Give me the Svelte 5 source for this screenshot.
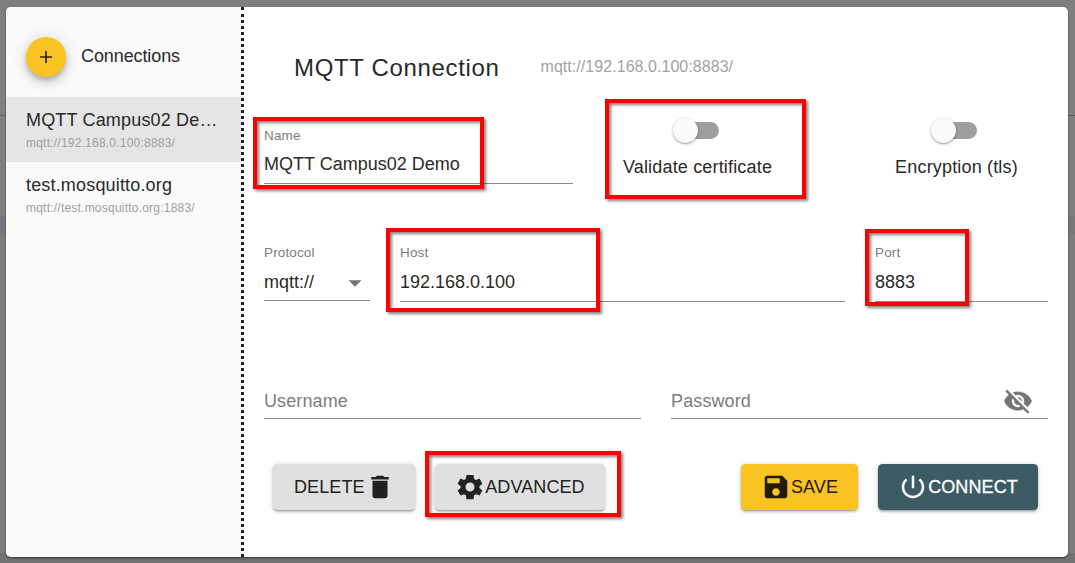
<script>
  const connections = [
    { name: 'MQTT Campus02 Demo', short: 'MQTT Campus02 De…', url: 'mqtt://192.168.0.100:8883/', active: true },
    { name: 'test.mosquitto.org', short: 'test.mosquitto.org', url: 'mqtt://test.mosquitto.org:1883/', active: false }
  ];
  const toggles = ['Validate certificate', 'Encryption (tls)'];
</script>

<div class="backdrop">
  <div class="dialog">
    <aside>
      <div class="side-head">
        <button class="fab" aria-label="Add">
          <svg width="14" height="14" viewBox="0 0 14 14"><path d="M7 1v12M1 7h12" stroke="#2b2208" stroke-width="1.7" /></svg>
        </button>
        <span>Connections</span>
      </div>
      {#each connections as c}
        <div class="item" class:active={c.active}>
          <div class="item-name">{c.short}</div>
          <div class="item-url">{c.url}</div>
        </div>
      {/each}
    </aside>
    <div class="divider"></div>

    <main>
      <header>
        <h1>MQTT Connection</h1>
        <span class="url">mqtt://192.168.0.100:8883/</span>
      </header>

      <div class="row row-name">
        <div class="field">
          <div class="label">Name</div>
          <div class="value">{connections[0].name}</div>
        </div>
        {#each toggles as t}
          <div class="toggle">
            <div class="switch"><i></i></div>
            <span>{t}</span>
          </div>
        {/each}
      </div>

      <div class="row row-host">
        <div class="field protocol">
          <div class="label">Protocol</div>
          <div class="value">
            mqtt://
            <svg width="14" height="7" viewBox="0 0 14 7"><path d="M0.5 0.3h13L7 6.8z" fill="#757575" /></svg>
          </div>
        </div>
        <div class="field">
          <div class="label">Host</div>
          <div class="value">192.168.0.100</div>
        </div>
        <div class="field">
          <div class="label">Port</div>
          <div class="value">8883</div>
        </div>
      </div>

      <div class="row row-auth">
        <div class="field empty"><span>Username</span></div>
        <div class="field empty">
          <span>Password</span>
          <svg class="eye" width="30" height="30" viewBox="0 0 24 24" fill="#757575" stroke="#757575" stroke-width="0.25"><path d="M12 7c2.76 0 5 2.24 5 5 0 .65-.13 1.26-.36 1.83l2.92 2.92c1.51-1.26 2.7-2.89 3.43-4.75-1.73-4.39-6-7.5-11-7.5-1.4 0-2.74.25-3.98.7l2.16 2.16C10.74 7.13 11.35 7 12 7zM2 4.27l2.28 2.28.46.46C3.08 8.3 1.78 10.02 1 12c1.73 4.39 6 7.5 11 7.5 1.55 0 3.03-.3 4.38-.84l.42.42L19.73 22 21 20.73 3.27 3 2 4.27zM7.53 9.8l1.55 1.55c-.05.21-.08.43-.08.65 0 1.66 1.34 3 3 3 .22 0 .44-.03.65-.08l1.55 1.55c-.67.33-1.41.53-2.2.53-2.76 0-5-2.24-5-5 0-.79.2-1.53.53-2.2zm4.31-.78l3.15 3.15.02-.16c0-1.66-1.34-3-3-3l-.17.01z" /></svg>
        </div>
      </div>

      <div class="actions">
        <button class="btn delete">DELETE
          <svg width="30" height="30" viewBox="0 0 24 24" fill="currentColor"><path d="M6 19c0 1.1.9 2 2 2h8c1.1 0 2-.9 2-2V7H6v12zM19 4h-3.5l-1-1h-5l-1 1H5v2h14V4z" /></svg>
        </button>
        <button class="btn advanced">
          <svg width="30" height="30" viewBox="0 0 24 24" fill="currentColor"><path fill-rule="evenodd" d="M9.2 2.3h5.6l.5 3.1 1.5.9 2.8-1.1 2.3 4.1-2.4 2v1.4l2.4 2-2.3 4.1-2.8-1.1-1.5.9-.5 3.1H9.2l-.5-3.1-1.5-.9-2.8 1.1-2.3-4.1 2.4-2v-1.4l-2.4-2 2.3-4.1 2.8 1.1 1.5-.9zM12 8.4a3.6 3.6 0 1 0 0 7.2 3.6 3.6 0 0 0 0-7.2z" /></svg>ADVANCED
        </button>
        <button class="btn save">
          <svg width="30" height="30" viewBox="0 0 24 24" fill="currentColor"><path d="M17 3H5c-1.11 0-2 .9-2 2v14c0 1.1.89 2 2 2h14c1.1 0 2-.9 2-2V7l-4-4zm-5 16c-1.66 0-3-1.34-3-3s1.34-3 3-3 3 1.34 3 3-1.34 3-3 3zm3-10H5V5h10v4z" /></svg>SAVE
        </button>
        <button class="btn connect">
          <svg width="30" height="30" viewBox="0 0 24 24" fill="currentColor"><path d="M13 3h-2v10h2V3zm4.83 2.17l-1.42 1.42C17.99 7.86 19 9.81 19 12c0 3.87-3.13 7-7 7s-7-3.13-7-7c0-2.19 1.01-4.14 2.58-5.42L6.17 5.17C4.23 6.82 3 9.26 3 12c0 4.97 4.03 9 9 9s9-4.03 9-9c0-2.74-1.23-5.18-3.17-6.83z" /></svg>CONNECT
        </button>
      </div>
    </main>
  </div>

  <div class="mark mark-name"></div>
  <div class="mark mark-validate"></div>
  <div class="mark mark-host"></div>
  <div class="mark mark-port"></div>
  <div class="mark mark-advanced"></div>
</div>

<style>
  :global(body) { margin: 0; overflow: hidden; }
  .backdrop {
    position: relative;
    box-sizing: border-box;
    width: 1075px;
    height: 563px;
    padding: 7px 7px 6px 6px;
    background: linear-gradient(#7f7f7f 0 115px, #5c5c5c 115px 116px, #7f7f7f 116px 216px, #77777d 216px 234px, #7d7d7d 234px 553px, #727272 553px);
    font-family: "Liberation Sans", Arial, sans-serif;
    font-size: 18px;
    letter-spacing: 0.17px;
    color: #2a2a2a;
  }
  .dialog {
    display: flex;
    height: 550px;
    border-radius: 5px;
    overflow: hidden;
    background: #fff;
    box-shadow: 0 1px 2px rgba(0, 0, 0, 0.55);
  }
  aside { flex: none; width: 235px; background: #fafafa; }
  .side-head {
    display: flex;
    gap: 15px;
    box-sizing: border-box;
    height: 90px;
    padding: 30px 20px 0;
    line-height: 38px;
    letter-spacing: -0.1px;
  }
  .fab {
    display: flex;
    align-items: center;
    justify-content: center;
    width: 40px;
    height: 40px;
    padding: 0;
    border: 0;
    border-radius: 50%;
    background: #f9c322;
    box-shadow: 0 3px 5px -1px rgba(0, 0, 0, 0.2), 0 6px 10px rgba(0, 0, 0, 0.14), 0 1px 18px rgba(0, 0, 0, 0.12);
  }
  .item { box-sizing: border-box; height: 65px; padding: 12px 20px 0; }
  .active { background: #e5e5e5; }
  .item-name { line-height: 22px; white-space: nowrap; }
  .item-url { margin-top: 3px; font-size: 12px; line-height: 18px; letter-spacing: 0.22px; color: #a0a0a0; }
  .divider {
    flex: none;
    width: 3px;
    background:
      linear-gradient(#212121, #212121) 0 0 / 3px 3px no-repeat,
      linear-gradient(#fff, #fff) 0 0 / 3px 7px no-repeat,
      repeating-linear-gradient(#fff 0 1px, #212121 1px 4px, #fff 4px 6px);
  }

  main { flex: 1; min-width: 0; padding: 0 20px; }
  header { display: flex; align-items: center; gap: 41px; height: 110px; padding-left: 30px; }
  h1 { margin: 12px 0 0; font-size: 24px; font-weight: 400; letter-spacing: 0.66px; }
  .url { margin-top: 9px; font-size: 16px; letter-spacing: 0.05px; color: #a3a3a3; }

  .row { display: grid; }
  .row-name { grid-template-columns: 309px 249px 269px; height: 117px; }
  .row-name .field { margin-top: 10px; }
  .field { align-self: start; border-bottom: 1px solid #8c8c8c; }
  .label { padding-top: 1px; font-size: 13.5px; line-height: 16px; letter-spacing: 0.13px; color: #7d7d7d; }
  .value { display: flex; align-items: center; justify-content: space-between; margin-top: 9px; padding-bottom: 8px; line-height: 22px; letter-spacing: 0; }
  .toggle { display: flex; flex-direction: column; align-items: center; line-height: 22px; }
  .switch { display: flex; align-items: center; width: 38px; height: 17px; margin: 5px 0 17px 3px; border-radius: 9px; background: #9e9e9e; }
  .toggle:nth-child(2) .switch { margin-left: 5px; }
  .switch i { flex: none; width: 25px; height: 25px; margin-left: -8px; border-radius: 50%; background: #fafafa; box-shadow: 0 1px 3px rgba(0, 0, 0, 0.3), 0 1px 1px rgba(0, 0, 0, 0.14); }

  .row-host { grid-template-columns: 106px 445px 173px; gap: 30px; height: 149px; padding-top: 10px; box-sizing: border-box; }
  .row-host .value { margin-top: 10px; }
  .protocol .value { padding: 0 8px 7px 0; }
  .protocol svg { margin-top: 2px; }
  .row-auth { grid-template-columns: 377px 377px; gap: 30px; height: 81px; }
  .empty { display: flex; justify-content: space-between; align-items: center; height: 35px; color: #7d7d7d; }
  .empty span { padding-top: 2px; letter-spacing: 0.12px; }
  .eye { margin-right: 15px; }

  .actions { display: flex; align-items: center; padding: 0 10px 0 9.3px; }
  .btn {
    display: flex;
    flex: none;
    align-items: center;
    justify-content: center;
    box-sizing: border-box;
    height: 46px;
    padding: 0;
    border: 0;
    border-radius: 4.5px;
    background: #e0e0e0;
    color: #212121;
    font: 18px "Liberation Sans", Arial, sans-serif;
    letter-spacing: 0.1px;
    box-shadow: 0 1px 5px rgba(0, 0, 0, 0.2), 0 2px 2px rgba(0, 0, 0, 0.14), 0 2px 1px -1px rgba(0, 0, 0, 0.12);
  }
  .delete { width: 142px; }
  .advanced { width: 170.6px; margin-left: 19.4px; }
  .save { width: 117px; margin-left: auto; background: #f9c322; color: #211a05; }
  .connect { width: 160px; margin-left: 20px; background: #3b5c65; color: #fff; -webkit-text-stroke: 0.3px #fff; }

  .mark {
    position: absolute;
    box-sizing: border-box;
    border: 4px solid #f00;
    filter: drop-shadow(2.5px 2.5px 1.5px rgba(0, 0, 0, 0.5));
  }
  .mark-name { left: 253px; top: 117px; width: 231px; height: 72px; }
  .mark-validate { left: 605px; top: 99px; width: 201px; height: 100px; }
  .mark-host { left: 386px; top: 228px; width: 214px; height: 84px; }
  .mark-port { left: 865px; top: 229px; width: 104px; height: 77px; }
  .mark-advanced { left: 425px; top: 451px; width: 196px; height: 66px; }
</style>
